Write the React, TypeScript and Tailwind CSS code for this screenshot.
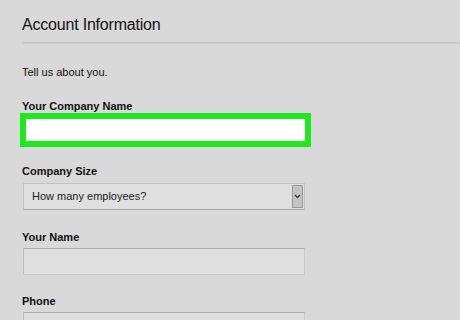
import React from "react";

export default function App() {
  const font = { fontFamily: '"Liberation Sans", Arial, sans-serif' };
  return (
    <div
      className="w-[460px] h-[320px] overflow-hidden bg-[#d9d9d9] pl-[22px] pt-[15px] text-[#111]"
      style={font}
    >
      <div className="text-[16px] leading-[20px] tracking-[-0.2px] text-[#111]">Account Information</div>
      <div className="mt-[7px] h-[2px] bg-[#c4c4c4] border-b border-[#cfcfcf]" />
      <div className="mt-[22px] text-[11px] leading-[13px]">Tell us about you.</div>

      <div className="mt-[21px] text-[11px] leading-[13px] font-bold">Your Company Name</div>
      <div className="ml-[-2px] w-[291px] h-[34px] border-[6px] border-[#1ee81e] bg-white" />

      <div className="mt-[18px] text-[11px] leading-[13px] font-bold">Company Size</div>
      <div className="mt-[5px] ml-[1px] w-[282px] h-[27px] flex border border-[#c2c2c2] border-b-[#a8a8a8] bg-[#dfdfdf]">
        <div className="flex-1 flex items-center pl-[8px] text-[11px] text-[#222]">How many employees?</div>
        <div className="w-[11px] my-[1px] mr-[1px] flex items-center justify-center bg-[#c4c4c4] border border-[#9a9a9a]">
          <svg width="7" height="5" viewBox="0 0 7 5">
            <path d="M1 1 L3.5 3.5 L6 1" fill="none" stroke="#333" strokeWidth="1.3" />
          </svg>
        </div>
      </div>

      <div className="mt-[21px] text-[11px] leading-[13px] font-bold">Your Name</div>
      <div className="mt-[4px] ml-[1px] w-[282px] h-[27px] border border-[#cacaca] border-t-[#a9a9a9] border-l-[#bdbdbd] bg-[#dfdfdf]" />

      <div className="mt-[20px] text-[11px] leading-[13px] font-bold">Phone</div>
      <div className="mt-[4px] ml-[1px] w-[282px] h-[27px] border border-[#cacaca] border-t-[#a9a9a9] border-l-[#bdbdbd] bg-[#dfdfdf]" />
    </div>
  );
}
